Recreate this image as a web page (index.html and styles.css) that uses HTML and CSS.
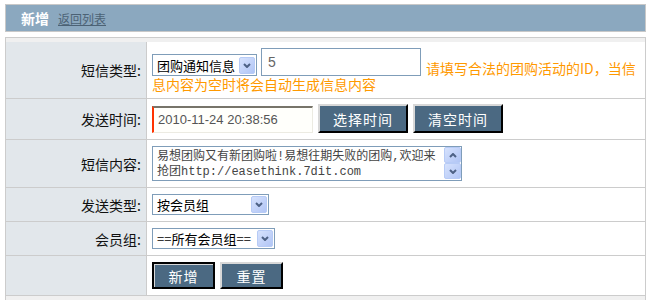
FILE: index.html
```html
<!DOCTYPE html>
<html lang="zh-CN">
<head>
    <meta charset="UTF-8">
    <title>新增短信</title>
    <link rel="stylesheet" href="styles.css">
</head>
<body>
    <div class="page">
        <div class="title-bar">
            <span class="title">新增</span>
            <a class="back-link" href="#">返回列表</a>
        </div>

        <div class="form-box">
            <form>
            <table class="form-table">
                <tr>
                    <td class="label">短信类型:</td>
                    <td class="field field-type"><span class="select-box sel-type"><select><option>团购通知信息</option></select><span class="drop-btn"><svg width="8" height="5" viewBox="0 0 8 5"><path d="M1 1L4 4L7 1" fill="none" stroke="#4d6185" stroke-width="2"/></svg></span></span><input class="text-input" type="text" value="5"><span class="tip">请填写合法的团购活动的ID，当信息内容为空时将会自动生成信息内容</span></td>
                </tr>
                <tr>
                    <td class="label">发送时间:</td>
                    <td class="field">
                        <div class="field-row">
                            <input class="date-input" type="text" value="2010-11-24 20:38:56">
                            <button type="button" class="btn btn-time">选择时间</button>
                            <button type="button" class="btn btn-time">清空时间</button>
                        </div>
                    </td>
                </tr>
                <tr>
                    <td class="label">短信内容:</td>
                    <td class="field">
                        <div class="field-row">
                            <div class="memo-box">
                                <textarea class="memo">易想团购又有新团购啦!易想往期失败的团购,欢迎来抢团http://easethink.7dit.com</textarea>
                                <div class="scroll-col">
                                    <span class="scroll-btn"><svg width="8" height="5" viewBox="0 0 8 5"><path d="M1 4L4 1L7 4" fill="none" stroke="#4d6185" stroke-width="2"/></svg></span>
                                    <span class="scroll-btn"><svg width="8" height="5" viewBox="0 0 8 5"><path d="M1 1L4 4L7 1" fill="none" stroke="#4d6185" stroke-width="2"/></svg></span>
                                </div>
                            </div>
                        </div>
                    </td>
                </tr>
                <tr>
                    <td class="label">发送类型:</td>
                    <td class="field">
                        <div class="field-row">
                            <span class="select-box sel-send"><select><option>按会员组</option></select><span class="drop-btn"><svg width="8" height="5" viewBox="0 0 8 5"><path d="M1 1L4 4L7 1" fill="none" stroke="#4d6185" stroke-width="2"/></svg></span></span>
                        </div>
                    </td>
                </tr>
                <tr>
                    <td class="label">会员组:</td>
                    <td class="field">
                        <div class="field-row">
                            <span class="select-box sel-group"><select><option>==所有会员组==</option></select><span class="drop-btn"><svg width="8" height="5" viewBox="0 0 8 5"><path d="M1 1L4 4L7 1" fill="none" stroke="#4d6185" stroke-width="2"/></svg></span></span>
                        </div>
                    </td>
                </tr>
                <tr>
                    <td class="label"></td>
                    <td class="field">
                        <div class="field-row">
                            <button type="button" class="btn btn-form btn-default">新增</button>
                            <button type="button" class="btn btn-form">重置</button>
                        </div>
                    </td>
                </tr>
            </table>
            </form>
        </div>
    </div>
</body>
</html>
```

FILE: styles.css
```css
body{
    margin: 0;
    background: #fff;
    color: #222;
    font-family: "Noto Sans CJK SC", sans-serif;
    font-size: 13px;
}
.page{
    width: 641px;
    margin: 4px 0 0 5px;
}

/* header bar */
.title-bar{
    height: 26px;
    border: 1px solid #c8c8c8;
    background: #8ba8bf;
    display: flex;
    align-items: center;
    padding-left: 15px;
}
.title{
    font-size: 14px;
    font-weight: bold;
    color: #fff;
    margin-right: 9px;
}
.back-link{
    font-size: 12px;
    color: #4c6275;
    text-decoration: underline;
}

/* form */
.form-box{
    margin-top: 5px;
    border: 1px solid #ccc;
    background: #f0f0f0;
    padding: 4px 0 10px 0;
}
.form-table{
    width: 100%;
    border-collapse: collapse;
    background: #fff;
}
.form-table td{
    border-bottom: 1px solid #ccc;
    padding: 6px 5px;
    line-height: 16px;
}
.form-table td.label{
    width: 130px;
    background: #e2e7eb;
    border-right: 1px solid #ccc;
    text-align: right;
    vertical-align: middle;
    color: #111;
    font-size: 14px;
}
.field-row{
    display: flex;
    align-items: center;
    gap: 5px;
}

/* selects */
.select-box{
    display: inline-flex;
    align-items: center;
    box-sizing: border-box;
    height: 21px;
    border: 1px solid #7f9db9;
    background: #fff;
}
.select-box select{
    flex: 1;
    min-width: 0;
    height: 100%;
    border: none;
    background: transparent;
    -webkit-appearance: none;
    appearance: none;
    font-family: "Noto Sans CJK SC", sans-serif;
    font-size: 13px;
    color: #000;
    padding: 0 0 0 4px;
    outline: none;
}
.drop-btn, .scroll-btn{
    box-sizing: border-box;
    width: 16px;
    height: 17px;
    border: 1px solid #b7cbf6;
    border-radius: 2px;
    background: linear-gradient(135deg, #d6e2fd, #b1c5f5);
    display: flex;
    align-items: center;
    justify-content: center;
}
.drop-btn{
    margin-right: 1px;
}
.sel-type{
    width: 105px;
    height: 22px;
    vertical-align: bottom;
}
.sel-send{
    width: 117px;
}
.sel-group{
    width: 123px;
}

.text-input{
    box-sizing: border-box;
    width: 160px;
    height: 28px;
    margin-left: 4px;
    border: 1px solid #7f9db9;
    padding: 0 6px;
    font-family: "Liberation Sans", sans-serif;
    font-size: 14px;
    color: #666;
    vertical-align: bottom;
}
.tip{
    margin-left: 5px;
    color: #ff9900;
    font-size: 14px;
    vertical-align: bottom;
}

/* date + buttons */
.date-input{
    box-sizing: border-box;
    width: 161px;
    height: 27px;
    border-style: solid;
    border-width: 2px 1px 1px 2px;
    border-color: #77746a #ecebe2 #ecebe2 #ff3300;
    background: #fffffb;
    padding: 0 4px;
    font-family: "Liberation Sans", sans-serif;
    font-size: 13px;
    color: #555;
}
.btn{
    box-sizing: border-box;
    background: #4b6982;
    color: #fff;
    font-family: "Noto Sans CJK SC", sans-serif;
    font-size: 14px;
    letter-spacing: 1px;
    border: 2px solid;
    border-color: #d8d8d8 #000 #000 #d8d8d8;
    padding: 0;
}
.btn-time{
    width: 90px;
    height: 29px;
    margin-top: -1px;
}
.btn-form{
    width: 63px;
    height: 27px;
}
.btn-default{
    border-color: #000;
    box-shadow: inset 1px 1px 0 #d8d8d8;
}

/* textarea with xp scrollbar */
.memo-box{
    display: flex;
    box-sizing: border-box;
    width: 310px;
    height: 35px;
    border: 1px solid #7f9db9;
    background: #fff;
}
.memo{
    box-sizing: border-box;
    width: 291px;
    height: 100%;
    border: none;
    resize: none;
    overflow: hidden;
    padding: 3px 4px;
    font-family: "Liberation Mono", "Noto Sans CJK SC", monospace;
    font-size: 12px;
    line-height: 15px;
    color: #444;
    outline: none;
}
.scroll-col{
    width: 17px;
    display: flex;
    flex-direction: column;
}
.scroll-btn{
    width: 17px;
    height: 16px;
}
```
